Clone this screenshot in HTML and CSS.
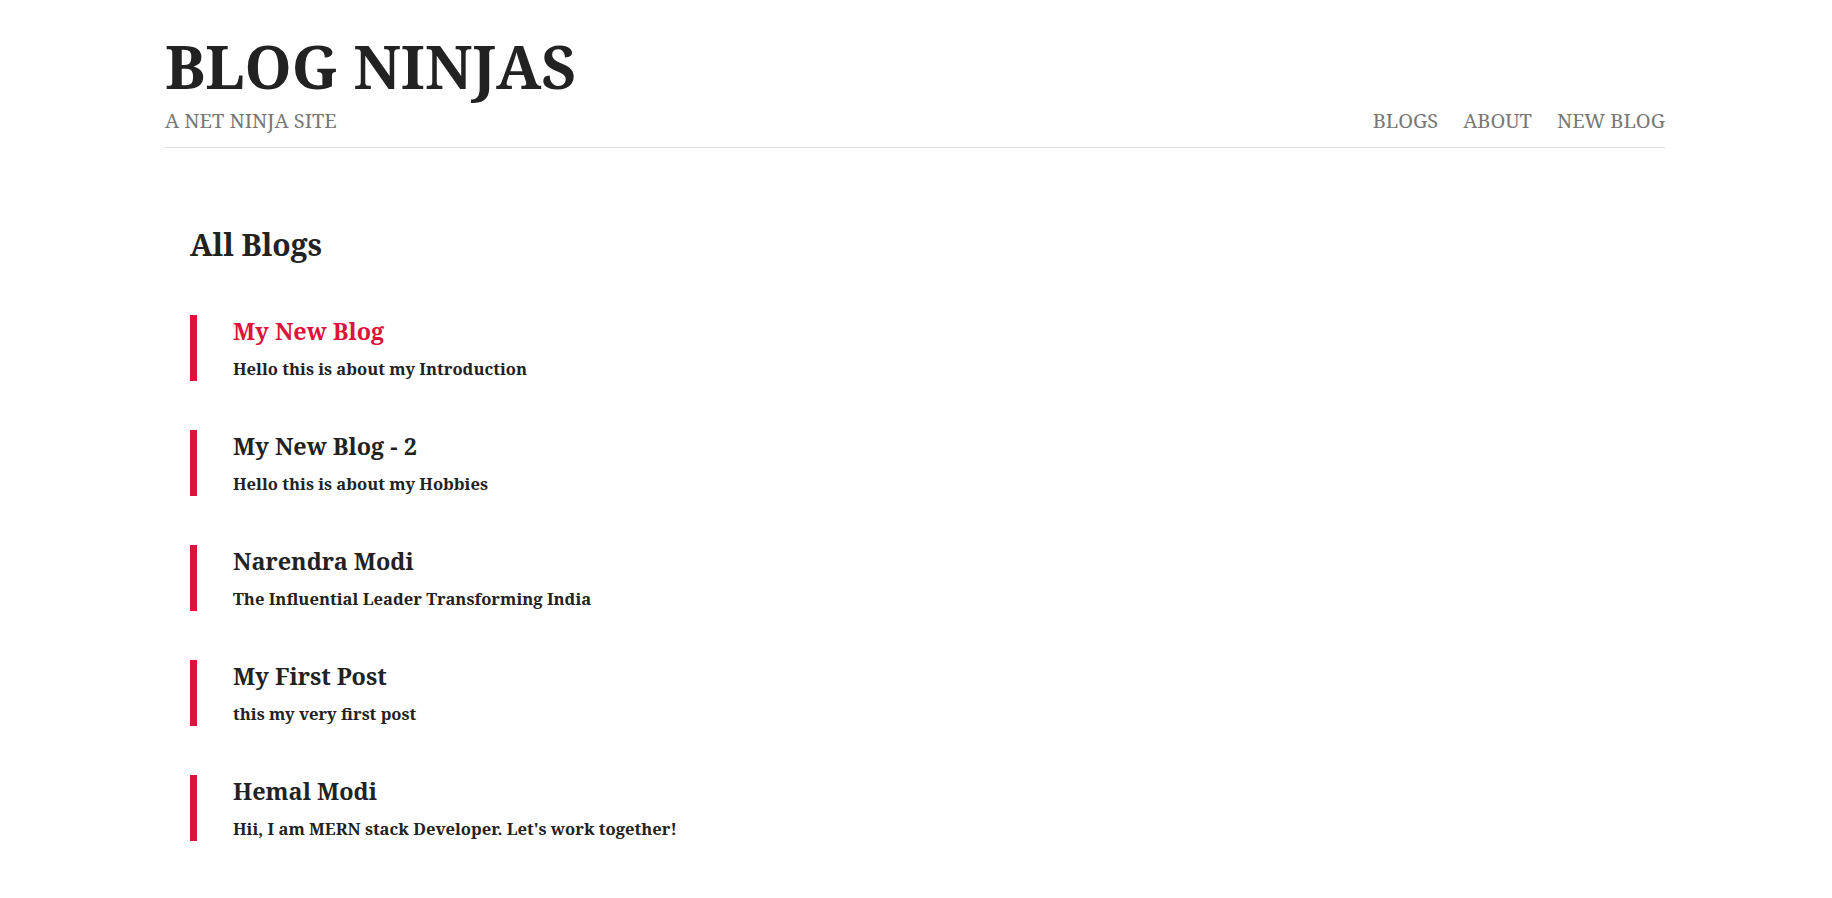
FILE: index.html
```html
<!DOCTYPE html>
<html lang="en">
<head>
<meta charset="utf-8">
<title>Blog Ninjas | All Blogs</title>
<link rel="stylesheet" href="styles.css">
</head>
<body>
<div class="page">
  <nav class="nav">
    <div class="site-logo">
      <h1 class="site-title">Blog Ninjas</h1>
      <p class="site-tagline">A Net Ninja Site</p>
    </div>
    <ul class="nav-links">
      <li><a href="#">Blogs</a></li>
      <li><a href="#">About</a></li>
      <li><a href="#">New Blog</a></li>
    </ul>
  </nav>
  <main class="content">
    <h2 class="page-heading">All Blogs</h2>
    <div class="blogs">
      <a class="blog-link hovered" href="#">
        <h3 class="blog-title">My New Blog</h3>
        <p class="blog-snippet">Hello this is about my Introduction</p>
      </a>
      <a class="blog-link" href="#">
        <h3 class="blog-title">My New Blog - 2</h3>
        <p class="blog-snippet">Hello this is about my Hobbies</p>
      </a>
      <a class="blog-link" href="#">
        <h3 class="blog-title">Narendra Modi</h3>
        <p class="blog-snippet">The Influential Leader Transforming India</p>
      </a>
      <a class="blog-link" href="#">
        <h3 class="blog-title">My First Post</h3>
        <p class="blog-snippet">this my very first post</p>
      </a>
      <a class="blog-link" href="#">
        <h3 class="blog-title">Hemal Modi</h3>
        <p class="blog-snippet">Hii, I am MERN stack Developer. Let's work together!</p>
      </a>
    </div>
  </main>
</div>
</body>
</html>
```

FILE: styles.css
```css
* { box-sizing: border-box; }
html, body { margin: 0; padding: 0; background: #fff; }
body {
  font-family: "Noto Serif", "DejaVu Serif", "Liberation Serif", serif;
  color: #222;
}
.page {
  width: 1502px;
  margin: 0 auto;
  padding: 32px 2px 0 0;
}
.nav {
  display: flex;
  justify-content: space-between;
  align-items: flex-end;
  padding-bottom: 12px;
  border-bottom: 1px solid #ddd;
  text-transform: uppercase;
}
.site-title {
  margin: 0;
  font-size: 60px;
  line-height: 68px;
  font-weight: 700;
}
.site-tagline {
  margin: 7px 0 0;
  font-size: 20px;
  line-height: 28px;
  color: #777;
}
.nav-links {
  display: flex;
  margin: 0;
  padding: 0;
  list-style: none;
}
.nav-links li { margin-left: 25px; }
.nav-links a {
  display: block;
  color: #777;
  text-decoration: none;
  font-size: 20px;
  line-height: 28px;
}
.content {
  margin-left: 25px;
  padding-top: 77px;
}
.page-heading {
  margin: 0 0 50px;
  font-size: 30px;
  line-height: 40px;
}
.blogs { display: flex; flex-direction: column; }
.blog-link {
  display: block;
  border-left: 7px solid crimson;
  padding: 1px 0 0 36px;
  margin-bottom: 49px;
  text-decoration: none;
  color: #222;
}
.blog-title {
  margin: 0 0 10px;
  font-size: 23.4px;
  line-height: 31px;
  text-transform: capitalize;
}
.blog-link.hovered .blog-title { color: crimson; }
.blog-snippet {
  margin: 0;
  font-size: 16.6px;
  line-height: 24px;
  font-weight: 700;
}
```
